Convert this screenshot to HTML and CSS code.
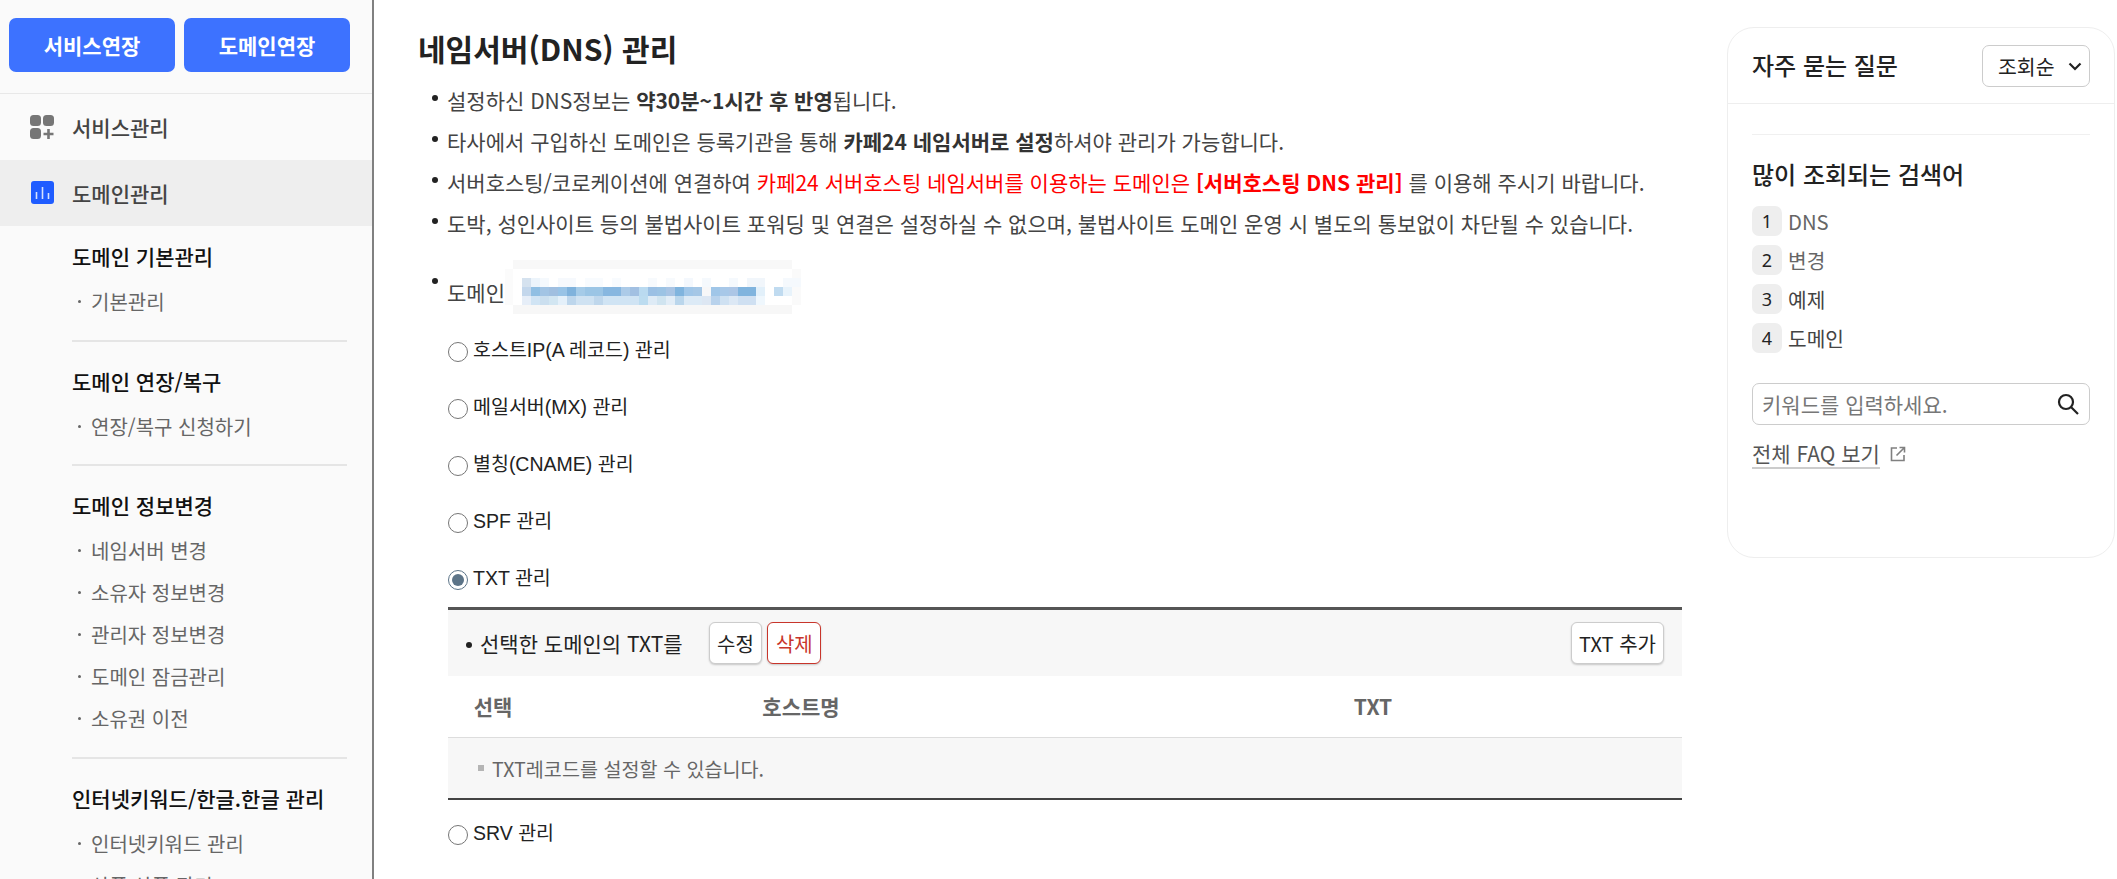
FILE: index.html
```html
<!DOCTYPE html>
<html lang="ko">
<head>
  <meta charset="UTF-8" />
  <title>네임서버(DNS) 관리</title>
  <link rel="stylesheet" href="styles.css">
</head>
<body>
  <div class="layout">
    <aside class="sidebar">
      <div class="side-buttons">
        <a href="#" class="extend-btn">서비스연장</a>
        <a href="#" class="extend-btn">도메인연장</a>
      </div>
      <nav>
        <a href="#" class="nav-item">
          <svg class="nav-icon" width="26" height="26" viewBox="0 0 26 26">
            <rect x="1" y="1" width="11" height="11" rx="3.5" fill="#767676"/>
            <rect x="14" y="1" width="11" height="11" rx="3.5" fill="#767676"/>
            <rect x="1" y="14" width="11" height="11" rx="3.5" fill="#767676"/>
            <path d="M19.5 15v10M14.5 20h10" stroke="#767676" stroke-width="2.6" fill="none"/>
          </svg>
          서비스관리
        </a>
        <a href="#" class="nav-item active">
          <svg class="nav-icon" width="26" height="26" viewBox="0 0 26 26">
            <rect x="2" y="1" width="23" height="23" rx="3" fill="#1f5cff"/>
            <path d="M7.5 12v7M13.5 7v12M19.5 13v6" stroke="#d5e2ff" stroke-width="1.6" fill="none"/>
          </svg>
          도메인관리
        </a>
      </nav>
      <div class="sub-menu">
        <section class="sub-group">
          <h3>도메인 기본관리</h3>
          <a href="#">기본관리</a>
        </section>
        <section class="sub-group">
          <h3>도메인 연장/복구</h3>
          <a href="#">연장/복구 신청하기</a>
        </section>
        <section class="sub-group">
          <h3>도메인 정보변경</h3>
          <a href="#">네임서버 변경</a>
          <a href="#">소유자 정보변경</a>
          <a href="#">관리자 정보변경</a>
          <a href="#">도메인 잠금관리</a>
          <a href="#">소유권 이전</a>
        </section>
        <section class="sub-group">
          <h3>인터넷키워드/한글.한글 관리</h3>
          <a href="#">인터넷키워드 관리</a>
          <a href="#">상품 상품 관리</a>
        </section>
      </div>
    </aside>

    <main class="content">
      <h1>네임서버(DNS) 관리</h1>
      <ul class="notice">
        <li>설정하신 DNS정보는 <strong>약30분~1시간 후 반영</strong>됩니다.</li>
        <li>타사에서 구입하신 도메인은 등록기관을 통해 <strong>카페24 네임서버로 설정</strong>하셔야 관리가 가능합니다.</li>
        <li>서버호스팅/코로케이션에 연결하여 <span class="red">카페24 서버호스팅 네임서버를 이용하는 도메인은 <strong>[서버호스팅 DNS 관리]</strong></span> 를 이용해 주시기 바랍니다.</li>
        <li>도박, 성인사이트 등의 불법사이트 포워딩 및 연결은 설정하실 수 없으며, 불법사이트 도메인 운영 시 별도의 통보없이 차단될 수 있습니다.</li>
      </ul>

      <div class="domain-row">
        <span class="domain-label">도메인</span>
        <svg class="domain-blur" width="296" height="54" viewBox="0 0 296 54" shape-rendering="crispEdges">
          <rect x="8" y="0" width="279" height="9" fill="#f8f8f8"/>
          <rect x="8" y="45" width="279" height="9" fill="#f7f7f7"/>
          <rect x="0" y="9" width="8" height="36" fill="#fbfbfb"/>
          <rect x="287" y="9" width="9" height="36" fill="#fafafa"/>
          <g id="row1">
            <rect x="17" y="18" width="9" height="9" fill="#d5e2ef"/><rect x="26" y="18" width="9" height="9" fill="#ecf4fb"/><rect x="35" y="18" width="9" height="9" fill="#f5f9fd"/>
            <rect x="53" y="18" width="18" height="9" fill="#f6f9fd"/><rect x="80" y="18" width="18" height="9" fill="#f8fbfe"/><rect x="107" y="18" width="9" height="9" fill="#f8fbfe"/>
            <rect x="143" y="18" width="9" height="9" fill="#f7fafd"/><rect x="161" y="18" width="9" height="9" fill="#f7fafd"/><rect x="179" y="18" width="9" height="9" fill="#f4f8fd"/>
            <rect x="197" y="18" width="9" height="9" fill="#f5f9fd"/><rect x="224" y="18" width="9" height="9" fill="#f5f9fd"/><rect x="242" y="18" width="18" height="9" fill="#f1f6fb"/>
            <rect x="278" y="18" width="18" height="9" fill="#f5f9fd"/>
          </g>
          <g id="row2">
            <rect x="17" y="27" width="9" height="9" fill="#c3d7ec"/><rect x="26" y="27" width="9" height="9" fill="#90bfe3"/><rect x="35" y="27" width="9" height="9" fill="#a2c4e4"/>
            <rect x="44" y="27" width="9" height="9" fill="#a0bfe0"/><rect x="53" y="27" width="9" height="9" fill="#98c3e6"/><rect x="62" y="27" width="9" height="9" fill="#7fb2dc"/>
            <rect x="71" y="27" width="9" height="9" fill="#a5cbe8"/><rect x="80" y="27" width="18" height="9" fill="#9bc5e5"/><rect x="98" y="27" width="18" height="9" fill="#87b7e0"/>
            <rect x="116" y="27" width="9" height="9" fill="#accbe8"/><rect x="125" y="27" width="9" height="9" fill="#a2c0e2"/><rect x="134" y="27" width="9" height="9" fill="#badaf0"/>
            <rect x="143" y="27" width="9" height="9" fill="#9bc0e4"/><rect x="152" y="27" width="9" height="9" fill="#9cc3e4"/><rect x="161" y="27" width="9" height="9" fill="#a8c4e4"/>
            <rect x="170" y="27" width="9" height="9" fill="#80b4de"/><rect x="179" y="27" width="9" height="9" fill="#a0c6e8"/><rect x="188" y="27" width="9" height="9" fill="#a5c7e6"/>
            <rect x="197" y="27" width="9" height="9" fill="#f7f7f8"/><rect x="206" y="27" width="9" height="9" fill="#a0c6e8"/><rect x="215" y="27" width="9" height="9" fill="#a8c8e8"/>
            <rect x="224" y="27" width="9" height="9" fill="#acc6e6"/><rect x="233" y="27" width="18" height="9" fill="#80b4de"/><rect x="251" y="27" width="9" height="9" fill="#e2f0fa"/>
            <rect x="269" y="27" width="9" height="9" fill="#c0dbf0"/><rect x="278" y="27" width="9" height="9" fill="#e8f3fb"/>
          </g>
          <g id="row3">
            <rect x="17" y="36" width="9" height="9" fill="#e6eef8"/><rect x="26" y="36" width="9" height="9" fill="#d0e4f4"/><rect x="35" y="36" width="9" height="9" fill="#cbdfef"/>
            <rect x="44" y="36" width="9" height="9" fill="#d2e6f2"/><rect x="53" y="36" width="9" height="9" fill="#e4f0fa"/><rect x="62" y="36" width="9" height="9" fill="#bdd6ec"/>
            <rect x="71" y="36" width="18" height="9" fill="#cfe2f2"/><rect x="89" y="36" width="9" height="9" fill="#bfd7ec"/><rect x="98" y="36" width="36" height="9" fill="#d0e4f4"/>
            <rect x="134" y="36" width="9" height="9" fill="#bcdcf0"/><rect x="143" y="36" width="9" height="9" fill="#deebf6"/><rect x="152" y="36" width="9" height="9" fill="#d0e4f0"/>
            <rect x="161" y="36" width="9" height="9" fill="#e2edf7"/><rect x="170" y="36" width="9" height="9" fill="#bad6ec"/><rect x="179" y="36" width="18" height="9" fill="#dceaf6"/>
            <rect x="197" y="36" width="9" height="9" fill="#dde7f3"/><rect x="206" y="36" width="9" height="9" fill="#b8d2ec"/><rect x="215" y="36" width="9" height="9" fill="#cfe1f2"/>
            <rect x="224" y="36" width="9" height="9" fill="#dce8f5"/><rect x="233" y="36" width="18" height="9" fill="#cfe0f2"/><rect x="251" y="36" width="9" height="9" fill="#eff7fd"/>
          </g>
        </svg>
      </div>

      <div class="record-types">
        <label class="radio-row"><input type="radio" name="rec" /><span>호스트IP(A 레코드) 관리</span></label>
        <label class="radio-row"><input type="radio" name="rec" /><span>메일서버(MX) 관리</span></label>
        <label class="radio-row"><input type="radio" name="rec" /><span>별칭(CNAME) 관리</span></label>
        <label class="radio-row"><input type="radio" name="rec" /><span>SPF 관리</span></label>
        <label class="radio-row"><input type="radio" name="rec" checked /><span>TXT 관리</span></label>
      </div>

      <div class="record-box">
        <div class="record-bar">
          <span class="record-title">선택한 도메인의 TXT를</span>
          <button class="small-btn" type="button">수정</button>
          <button class="small-btn danger" type="button">삭제</button>
          <button class="small-btn push-right" type="button">TXT 추가</button>
        </div>
        <table class="record-table">
          <thead>
            <tr><th class="col-select">선택</th><th class="col-host">호스트명</th><th>TXT</th></tr>
          </thead>
          <tbody>
            <tr><td colspan="3" class="empty-row">TXT레코드를 설정할 수 있습니다.</td></tr>
          </tbody>
        </table>
      </div>

      <label class="radio-row srv-row"><input type="radio" name="rec" /><span>SRV 관리</span></label>
    </main>

    <aside class="faq">
      <div class="faq-head">
        <h2>자주 묻는 질문</h2>
        <div class="faq-sort-wrap">
          <select class="faq-sort">
            <option>조회순</option>
            <option>최신순</option>
          </select>
          <svg class="faq-sort-arrow" width="14" height="9" viewBox="0 0 14 9" fill="none" stroke="#222" stroke-width="2.2">
            <path d="M1.5 1.5L7 7l5.5-5.5"/>
          </svg>
        </div>
      </div>
      <div class="faq-body">
        <h3>많이 조회되는 검색어</h3>
        <ol class="rank-list">
          <li><span class="rank">1</span><a href="#" class="muted">DNS</a></li>
          <li><span class="rank">2</span><a href="#" class="muted">변경</a></li>
          <li><span class="rank">3</span><a href="#">예제</a></li>
          <li><span class="rank">4</span><a href="#">도메인</a></li>
        </ol>
        <div class="faq-search">
          <input type="text" placeholder="키워드를 입력하세요." />
          <svg width="24" height="24" viewBox="0 0 24 24" fill="none" stroke="#222" stroke-width="2.2">
            <circle cx="10" cy="10" r="7"/>
            <path d="M15.2 15.2L22 22"/>
          </svg>
        </div>
        <a href="#" class="faq-all">
          <span>전체 FAQ 보기</span>
          <svg width="16" height="16" viewBox="0 0 16 16" fill="none" stroke="#808080" stroke-width="1.6">
            <path d="M7 2H1.5v12.5H14V9"/>
            <path d="M6.5 9.5L14 2M9.5 1.5h5v5"/>
          </svg>
        </a>
      </div>
    </aside>
  </div>
</body>
</html>
```

FILE: styles.css
```css
* {
  box-sizing: border-box;
}

html, body {
  margin: 0;
  padding: 0;
  height: 100%;
  overflow: hidden;
}

body {
  font-family: "Noto Sans CJK KR", "Noto Sans", sans-serif;
  color: #111;
  background: #fff;
}

a {
  color: inherit;
  text-decoration: none;
}

.layout {
  display: flex;
  align-items: flex-start;
  height: 879px;
  overflow: hidden;
}

/* sidebar */
.sidebar {
  flex: 0 0 374px;
  height: 879px;
  overflow: hidden;
  background: #fafafa;
  border-right: 2px solid #808080;
}

.side-buttons {
  display: flex;
  gap: 9px;
  padding: 18px 0 21px 9px;
  border-bottom: 1px solid #e8e8e8;
}

.extend-btn {
  width: 166px;
  height: 54px;
  line-height: 54px;
  text-align: center;
  background: #3d72ff;
  border-radius: 7px;
  color: #fff;
  font-size: 21px;
  font-weight: 700;
}

.nav-item {
  display: flex;
  align-items: center;
  gap: 17px;
  height: 66px;
  padding-left: 29px;
  font-size: 21px;
  font-weight: 500;
  color: #444;
}

.nav-item.active {
  background: #eee;
}

.nav-icon {
  flex: none;
}

.sub-menu {
  padding: 10px 25px 0 72px;
}

.sub-group {
  padding-bottom: 16.5px;
  margin-bottom: 19px;
  border-bottom: 2px solid #e5e5e5;
}

.sub-group:last-child {
  border-bottom: none;
}

.sub-group h3 {
  margin: 0 0 3px;
  height: 42px;
  line-height: 40px;
  font-size: 21px;
  font-weight: 500;
  color: #111;
}

.sub-group a {
  display: block;
  position: relative;
  height: 42px;
  line-height: 42px;
  padding-left: 19px;
  font-size: 20px;
  color: #666;
}

.sub-group a::before {
  content: "";
  position: absolute;
  left: 6px;
  top: 19px;
  width: 3px;
  height: 3px;
  border-radius: 50%;
  background: #666;
}

/* main */
.content {
  flex: 0 0 1308px;
  padding: 0 0 0 45px;
  margin-right: 45px;
}

.content h1 {
  margin: 0 0 0 -1px;
  padding-top: 26px;
  height: 80px;
  line-height: 44px;
  font-size: 30px;
  font-weight: 700;
  color: #222;
}

.notice {
  list-style: none;
  margin: 0;
  padding: 0 0 0 28px;
  font-size: 21px;
  color: #444;
}

.notice li {
  position: relative;
  height: 41px;
  line-height: 41px;
  white-space: nowrap;
}

.notice li::before,
.domain-row::before {
  content: "";
  position: absolute;
  left: -15px;
  top: 15px;
  width: 6px;
  height: 6px;
  border-radius: 50%;
  background: #222;
}

.notice strong {
  font-weight: 700;
  color: #333;
}

.notice .red,
.notice .red strong {
  color: #f00;
}

.domain-row {
  position: relative;
  display: flex;
  align-items: center;
  height: 54px;
  margin: 16px 0 0 28px;
  font-size: 21px;
  color: #444;
}

.domain-row::before {
  top: 18px;
}

.domain-label {
  padding-top: 10px;
}

.domain-blur {
  display: block;
}

.record-types {
  padding: 9px 0 0 29px;
}

.radio-row {
  display: flex;
  align-items: center;
  height: 57px;
  font-family: "Liberation Sans", "Noto Sans CJK KR", sans-serif;
  font-size: 19.5px;
  color: #222;
}

.radio-row input {
  flex: none;
  width: 20px;
  height: 20px;
  margin: 0 5px 0 0;
  accent-color: #5c7488;
}

.radio-row span {
  position: relative;
  top: -3px;
}

.record-box {
  margin: -1px 0 0 29px;
  width: 1234px;
  border-top: 3px solid #555;
  border-bottom: 2px solid #444;
}

.record-bar {
  display: flex;
  align-items: center;
  gap: 5px;
  height: 66px;
  padding: 0 18px 0 32px;
  background: #f7f7f7;
}

.record-title {
  position: relative;
  margin-right: 21px;
  font-size: 21px;
  color: #222;
}

.record-title::before {
  content: "";
  position: absolute;
  left: -14px;
  top: 14px;
  width: 6px;
  height: 6px;
  border-radius: 50%;
  background: #222;
}

.small-btn {
  height: 42px;
  padding: 0 7.5px;
  background: #fff;
  border: 1px solid #ccc;
  border-radius: 6px;
  box-shadow: 0 1px 2px rgba(0, 0, 0, 0.2);
  font-family: inherit;
  font-size: 20px;
  color: #222;
}

.small-btn.danger {
  border-color: #c8352b;
  color: #c8352b;
}

.small-btn.push-right {
  margin-left: auto;
  padding: 0 7px;
}

.record-table {
  width: 100%;
  border-collapse: collapse;
  table-layout: fixed;
}

.record-table th {
  height: 61px;
  border-bottom: 1px solid #ddd;
  font-size: 21px;
  font-weight: 700;
  color: #666;
}

.col-select {
  width: 90px;
}

.col-host {
  width: 526px;
}

.empty-row {
  position: relative;
  height: 61px;
  padding: 1px 0 0 44px;
  background: #f7f7f7;
  font-size: 19.6px;
  color: #666;
}

.empty-row::before {
  content: "";
  position: absolute;
  left: 30px;
  top: 27px;
  width: 6px;
  height: 6px;
  background: #b5b5b5;
}

.srv-row {
  margin: 6px 0 0 29px;
}

/* faq panel */
.faq {
  flex: 0 0 388px;
  margin-top: 27px;
  height: 531px;
  background: #fff;
  border: 1px solid #eee;
  border-radius: 27px;
}

.faq-head {
  display: flex;
  align-items: center;
  justify-content: space-between;
  height: 76px;
  padding: 0 24px;
  border-bottom: 1px solid #eee;
}

.faq-head h2 {
  margin: 0;
  padding-bottom: 2px;
  font-size: 24px;
  font-weight: 500;
  color: #222;
}

.faq-sort-wrap {
  position: relative;
  width: 108px;
  height: 42px;
}

.faq-sort {
  appearance: none;
  width: 100%;
  height: 100%;
  padding: 0 0 0 15px;
  background: #fff;
  border: 1px solid #ccc;
  border-radius: 7px;
  font-family: inherit;
  font-size: 20.5px;
  color: #222;
}

.faq-sort-arrow {
  position: absolute;
  right: 8px;
  top: 17px;
  pointer-events: none;
}

.faq-body {
  margin: 30px 24px 0;
  padding-top: 16px;
  border-top: 1px solid #f0f0f0;
}

.faq-body h3 {
  margin: 0 0 3px;
  height: 46px;
  line-height: 46px;
  font-size: 24px;
  font-weight: 500;
  color: #222;
}

.rank-list {
  list-style: none;
  margin: 9px 0 0;
  padding: 0;
}

.rank-list li {
  display: flex;
  align-items: center;
  gap: 6px;
  height: 30px;
  margin-bottom: 9px;
  font-size: 20.25px;
  color: #444;
}

.rank-list .muted {
  color: #666;
}

.rank {
  flex: none;
  width: 30px;
  height: 30px;
  line-height: 30px;
  text-align: center;
  background: #eee;
  border-radius: 7px;
  font-family: "Noto Sans", sans-serif;
  font-size: 18px;
  color: #222;
}

.faq-search {
  display: flex;
  align-items: center;
  height: 42px;
  margin-top: 30px;
  padding: 0 9px;
  border: 1px solid #ccc;
  border-radius: 7px;
}

.faq-search input {
  flex: 1;
  min-width: 0;
  border: none;
  outline: none;
  padding: 0;
  font-family: inherit;
  font-size: 21px;
}

.faq-search input::placeholder {
  color: #777;
}

.faq-all {
  display: flex;
  align-items: center;
  gap: 10px;
  margin-top: 14px;
  font-size: 21px;
  color: #555;
}

.faq-all span {
  line-height: 28px;
  border-bottom: 2px solid #ccc;
}
```
